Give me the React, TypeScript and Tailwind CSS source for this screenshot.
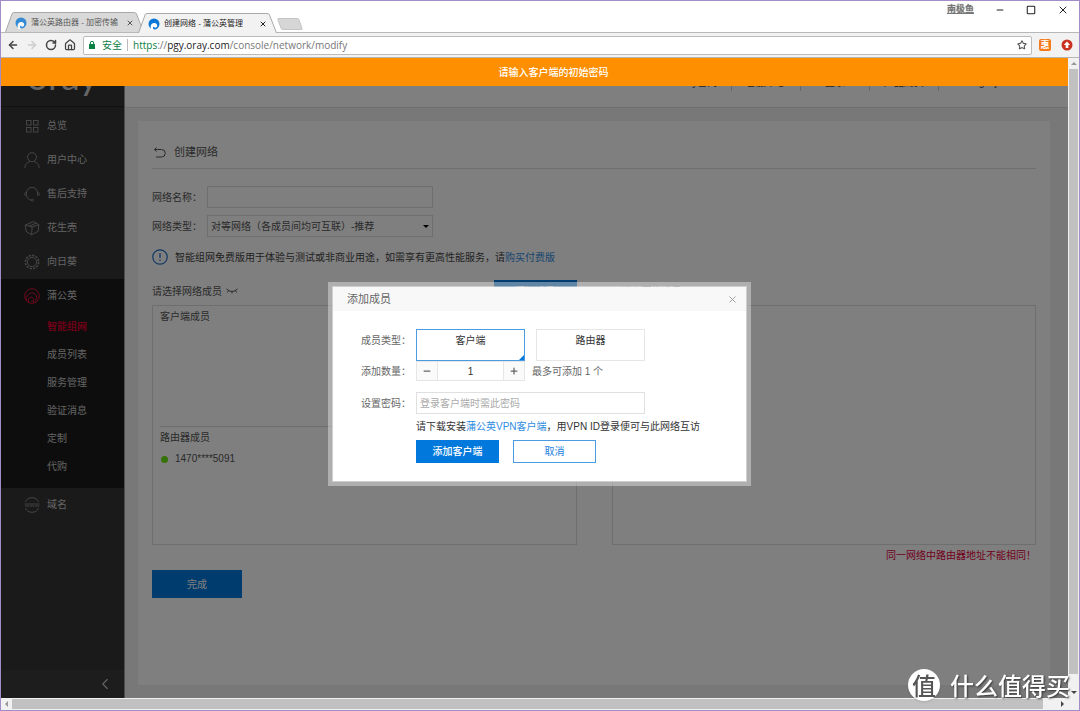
import React, { useState } from 'react';
import {
  ArrowLeft,
  ArrowRight,
  ChevronLeft,
  House,
  Minus,
  Plus,
  RotateCw,
  Square,
  Star,
  X,
} from 'lucide-react';
import { clsx } from 'clsx';

type IconProps = { className?: string };

const LINE = { fill: 'none', stroke: 'currentColor', strokeWidth: 1 } as const;

function OrayMark({ className }: IconProps) {
  return (
    <svg viewBox="0 0 12 12" className={className}>
      <circle cx="6" cy="6" r="5.5" fill="currentColor" />
      <path d="M3.400 12.200C1.400 8 3.500 5 6.200 5c2 0 3 1.400 3 2.700 0 1.300-1 2-1.900 2-1 0-1.500-.6-1.500-1.200-1.200.6-1.200 2 .4 3.700z" fill="#fff" />
    </svg>
  );
}

function LockIcon({ className }: IconProps) {
  return (
    <svg viewBox="0 0 8 10" className={className}>
      <rect x="1" y="4" width="6" height="5" rx=".5" fill="currentColor" />
      <path d="M2.300 4.500V3a1.700 1.700 0 0 1 3.400 0v1.500" fill="none" stroke="currentColor" />
    </svg>
  );
}

function GridIcon({ className }: IconProps) {
  return (
    <svg viewBox="0 0 16 16" className={className} {...LINE}>
      <rect x="2.500" y="2.500" width="4.500" height="4.500" />
      <rect x="9.500" y="2.500" width="4.500" height="4.500" />
      <rect x="2.500" y="9.500" width="4.500" height="4.500" />
      <rect x="9.500" y="9.500" width="4.500" height="4.500" />
    </svg>
  );
}

function UserIcon({ className }: IconProps) {
  return (
    <svg viewBox="0 0 16 16" className={className} {...LINE}>
      <circle cx="8" cy="5.200" r="4.500" />
      <path d="M.8 15.800c.3-3.600 2.600-5.600 5-6.300M15.200 15.800c-.3-3.600-2.600-5.600-5-6.300" />
    </svg>
  );
}

function HeadsetIcon({ className }: IconProps) {
  return (
    <svg viewBox="0 0 16 16" className={className} {...LINE}>
      <path d="M2.400 9.500V7a5.600 5.600 0 0 1 11.200 0v2.500" />
      <path d="M2.400 6.500C1 6.500.6 7.200.6 8s.4 1.600 1.800 1.600M13.600 6.500c1.400 0 1.800.7 1.800 1.500s-.4 1.600-1.800 1.600" />
      <path d="M2.600 10c.8 2.600 2.600 4 4.600 4.200" />
      <circle cx="8.400" cy="14.200" r="1" />
    </svg>
  );
}

function CubeIcon({ className }: IconProps) {
  return (
    <svg viewBox="0 0 16 16" className={className} {...LINE}>
      <path d="M1.200 5.200 9.500 1.500l5.300 3.200-.6 6.600-6.700 3.500-5.300-3.300z" />
      <path d="M1.200 5.200 8.200 7l6.600-2.300M8.200 7l-.7 7.800M5 6.200l7.200-3" />
    </svg>
  );
}

function SunflowerIcon({ className }: IconProps) {
  return (
    <svg viewBox="0 0 16 16" className={className} {...LINE}>
      <circle cx="8" cy="8" r="4.600" />
      <circle cx="8" cy="8" r="6.600" strokeWidth="1.600" strokeDasharray="2.200 1.256" />
    </svg>
  );
}

function DandelionIcon({ className }: IconProps) {
  return (
    <svg viewBox="0 0 16 16" className={className} {...LINE}>
      <circle cx="8" cy="8" r="7.300" />
      <path d="M2.200 12.500C1.800 7.800 4.600 5 8 5c3 0 4.700 2.200 4.700 4.500S11 13.600 9 13.600" />
      <path d="M4.600 14.400c-1-2.600.3-5.200 2.600-5.200 1.400 0 2.300 1 2.300 2.100 0 1.200-.9 2-2 2" />
    </svg>
  );
}

function WwwIcon({ className }: IconProps) {
  return (
    <svg viewBox="0 0 16 16" className={className} {...LINE}>
      <path d="M1.500 4.800a7.200 7.200 0 0 1 13 0M1.500 11.200a7.200 7.200 0 0 0 13 0" />
      <text x="8" y="10" textAnchor="middle" fontSize="7" fill="currentColor" stroke="none">www</text>
    </svg>
  );
}

const MENU = [
  { label: '总览', icon: GridIcon },
  { label: '用户中心', icon: UserIcon },
  { label: '售后支持', icon: HeadsetIcon },
  { label: '花生壳', icon: CubeIcon },
  { label: '向日葵', icon: SunflowerIcon },
];

const SUB_MENU = ['智能组网', '成员列表', '服务管理', '验证消息', '定制', '代购'];

const TOP_LINKS = ['Oray官网', '客服中心', '登录', '产品购买', 'Yingliujun'];

function Tab({ title, active }: { title: string; active?: boolean }) {
  return (
    <div className={clsx('relative flex h-5 w-[139px] items-center pt-0.5 pr-2.5 pl-2.5', active ? 'z-10 -mb-px -ml-1.5' : 'text-[#555]')}>
      <svg viewBox="0 0 139 20" preserveAspectRatio="none" className="absolute inset-0 h-full w-full">
        <path
          d="M.5 20 7 2Q7.500.5 9 .5H129Q131 .5 131.500 2L138.500 20"
          fill={active ? '#f2f2f2' : '#d9d9d9'}
          stroke="#a9a9a9"
        />
      </svg>
      <OrayMark className={clsx('relative mr-1 h-3 w-3 shrink-0 text-[#0a78d6]', !active && 'opacity-80')} />
      <span className="relative flex-1 text-[8px] leading-4 whitespace-nowrap">{title}</span>
      <button aria-label="关闭标签页" className="relative"><X className="h-2 w-2" strokeWidth={3} /></button>
    </div>
  );
}

function BrowserChrome() {
  return (
    <header className="shrink-0 bg-white text-[#222]">
      <div className="flex h-8 items-end border-b border-[#b8b8b8] pl-1">
        <Tab title="蒲公英路由器 - 加密传输" />
        <Tab title="创建网络 - 蒲公英管理" active />
        <button aria-label="新标签页" className="mb-0.5 ml-0.5 h-3 w-[22px] skew-x-[20deg] rounded-xs border border-[#c4c4c4] bg-[#d6d6d6]" />
        <div className="ml-auto flex items-center gap-[21px] self-start pt-0.5 pr-2.5">
          <span className="text-[9px] text-[#777] underline [text-shadow:0_0_1px_#333]">南极鱼</span>
          <button aria-label="最小化"><Minus className="h-2.5 w-2.5" strokeWidth={2.5} /></button>
          <button aria-label="最大化"><Square className="h-2.5 w-2.5" strokeWidth={2.5} /></button>
          <button aria-label="关闭"><X className="h-3 w-3" strokeWidth={2} /></button>
        </div>
      </div>
      <div className="flex h-[25px] items-center border-b border-[#b5b5b5] bg-[#f2f2f2] pr-1.5 pl-1.5">
        <div className="flex w-[76px] items-center gap-[7px] text-[#444]">
          <button aria-label="后退"><ArrowLeft className="h-3 w-3" strokeWidth={3} /></button>
          <button aria-label="前进" className="text-[#ccc]"><ArrowRight className="h-3 w-3" strokeWidth={3} /></button>
          <button aria-label="刷新"><RotateCw className="h-3 w-3" strokeWidth={3} /></button>
          <button aria-label="主页"><House className="h-3 w-3" strokeWidth={2.5} /></button>
        </div>
        <div className="flex h-[19px] flex-1 items-center rounded-xs border border-[#bbb] bg-white px-1 text-[10px]">
          <LockIcon className="mr-1.5 h-2.5 w-2 text-[#0b8043]" />
          <span className="text-[#0b8043]">安全</span>
          <span className="mx-[5px] h-3 w-px bg-[#bbb]" />
          <span className="font-['Open_Sans'] text-[10px] text-[#777]">
            <span className="text-[#0b8043]">https</span>://<span className="text-[#222]">pgy.oray.com</span>/console/network/modify
          </span>
          <button aria-label="收藏" className="ml-auto"><Star className="h-2.5 w-2.5 text-[#555]" strokeWidth={2.5} /></button>
        </div>
        <button aria-label="惠" className="ml-[7px] flex h-3 w-3 items-center justify-center rounded-xs bg-[#f47a1c] text-[9px] leading-none font-bold text-white">惠</button>
        <button aria-label="扩展程序" className="ml-2.5">
          <svg viewBox="0 0 12 12" className="h-3 w-3">
            <circle cx="6" cy="6" r="5.500" fill="#c8321f" />
            <path d="M6 2.500 9.200 6H7.300v3H4.700V6H2.800z" fill="#fff" />
          </svg>
        </button>
      </div>
    </header>
  );
}

function Sidebar() {
  return (
    <aside className="flex w-[124px] shrink-0 flex-col border-r border-[#999] bg-[#353535] text-[#c8c8c8]">
      <div className="h-[49px] shrink-0 border-b border-[#222] pl-[26px]">
        <span className="block font-['Lato'] text-[37px] leading-9 text-[#ccc]">oray</span>
      </div>
      <nav className="pt-0.5 leading-4">
        {MENU.map(({ label, icon: Icon }) => (
          <a key={label} href="#" className="flex h-[34px] items-center pl-[23px]">
            <Icon className="mr-[7px] h-4 w-4 text-[#8a8a8a]" />
            {label}
          </a>
        ))}
        <div className="bg-[#1a1a1a] pb-[7px]">
          <a href="#" className="flex h-[34px] items-center pl-[23px]">
            <DandelionIcon className="mr-[7px] h-4 w-4 text-[#e0103a]" />
            蒲公英
          </a>
          {SUB_MENU.map((item, i) => (
            <a key={item} href="#" className={clsx('flex h-7 items-center pl-[46px]', i === 0 && 'font-bold text-[#d4002e]')}>
              {item}
            </a>
          ))}
        </div>
        <a href="#" className="flex h-[34px] items-center pl-[23px]">
          <WwwIcon className="mr-[7px] h-4 w-4 text-[#8a8a8a]" />
          域名
        </a>
      </nav>
      <button aria-label="收起" className="mt-auto flex h-7 items-center justify-end bg-[#3a3a3a] pr-2.5">
        <ChevronLeft className="h-[18px] w-[18px]" strokeWidth={1.5} />
      </button>
    </aside>
  );
}

function NetworkForm() {
  return (
    <section className="mt-[13px] mr-[18px] mb-[13px] ml-[13px] flex-1 bg-white px-3.5 text-[#555]">
      <h1 className="flex h-12 items-center gap-2 border-b border-[#ddd] pt-4 text-[11px]">
        <svg viewBox="0 0 14 12" className="h-3 w-3.5" fill="none" stroke="currentColor">
          <path d="M4.500.5 2.500 2.500l2 2M2.500 2.500h7a3.500 3.500 0 0 1 0 7.500H4" />
        </svg>
        创建网络
      </h1>

      <div className="mt-[17px] flex h-[22px] items-center">
        <label htmlFor="net-name" className="w-[55px]">网络名称：</label>
        <input id="net-name" className="h-full w-[226px] border border-[#ddd] bg-white px-1" />
      </div>
      <div className="mt-[7px] flex h-[22px] items-center">
        <label htmlFor="net-type" className="w-[55px]">网络类型：</label>
        <div className="relative h-full w-[226px]">
          <select id="net-type" className="h-full w-full appearance-none border border-[#ddd] bg-white px-[3px]">
            <option>对等网络（各成员间均可互联）-推荐</option>
          </select>
          <span className="pointer-events-none absolute top-[10px] right-1 border-x-3 border-t-3 border-x-transparent border-t-black" />
        </div>
      </div>

      <p className="mt-2.5 flex h-5 items-center text-[#444]">
        <svg viewBox="0 0 16 16" className="mr-[7px] h-4 w-4 text-[#1f6cc8]" fill="none" stroke="currentColor" strokeWidth="1.200">
          <circle cx="8" cy="8" r="7.200" />
          <path d="M8 4v5M8 10.500V12" />
        </svg>
        智能组网免费版用于体验与测试或非商业用途，如需享有更高性能服务，请
        <a href="#" className="text-[#2f8be0]">购买付费版</a>
      </p>

      <div className="mt-[13px] grid grid-cols-2 gap-x-[35px]">
        <div>
          <div className="flex h-[22px] items-center">
            请选择网络成员
            <svg viewBox="0 0 12 6" className="ml-1 h-1.5 w-3" fill="none" stroke="currentColor">
              <path d="M.5 1Q6 6 11.500 1M2.500 2.500l-1 2M6 3.500v2M9.500 2.500l1 2" />
            </svg>
            <button className="ml-auto h-full w-[83px] bg-[#0078dc] text-white">添加成员</button>
          </div>
          <div className="mt-[3px] h-60 border border-[#ddd] px-[7px] pt-[3px] leading-4">
            <div className="h-[118px] border-b border-[#ddd]">客户端成员</div>
            <div className="pt-[3px]">路由器成员</div>
            <div className="mt-[5px] flex items-center">
              <span className="mr-[7px] ml-px h-[7px] w-[7px] rounded-full bg-[#6ae612]" />
              1470****5091
            </div>
          </div>
        </div>
        <div>
          <div className="flex h-[22px] items-center">已选中网络成员</div>
          <div className="mt-[3px] h-60 border border-[#ddd]" />
        </div>
      </div>
      <p className="mt-[3px] text-right leading-4 text-[#e6003c]">同一网络中路由器地址不能相同！</p>
      <button className="mt-1.5 h-7 w-[90px] bg-[#0078dc] text-white">完成</button>
    </section>
  );
}

function MemberDialog() {
  const [kind, setKind] = useState('客户端');

  return (
    <div role="dialog" aria-labelledby="dialog-title" className="w-[423px] bg-white/38 p-[5px]">
      <div className="bg-white text-[#666] outline outline-white/40">
        <div className="flex h-6 items-center justify-between bg-[#f8f8f8] pr-2 pl-3.5">
          <h2 id="dialog-title" className="text-[11px]">添加成员</h2>
          <button aria-label="关闭"><X className="h-[11px] w-[11px] text-[#999]" strokeWidth={2} /></button>
        </div>
        <form className="pt-[18px] pb-[18px] pl-7">
          <div role="radiogroup" aria-labelledby="kind-label" className="flex leading-[22px]">
            <span id="kind-label" className="w-[55px] pt-px">成员类型：</span>
            <div className="flex gap-[11px] text-center text-[#333]">
              {['客户端', '路由器'].map(item => (
                <label
                  key={item}
                  className={clsx('relative h-8 w-[109px] border', kind === item ? 'border-[#4a9ae4]' : 'border-[#e6e6e6]')}
                >
                  <input type="radio" name="kind" className="sr-only" checked={kind === item} onChange={() => setKind(item)} />
                  {item}
                  {kind === item && (
                    <span className="absolute right-0 bottom-0 border-t-5 border-r-5 border-t-transparent border-r-[#0078dc]" />
                  )}
                </label>
              ))}
            </div>
          </div>

          <div className="flex h-5 items-center">
            <label htmlFor="amount" className="w-[55px]">添加数量：</label>
            <div className="flex h-full w-[109px] border border-[#e6e6e6]">
              <button type="button" aria-label="减少" className="flex w-5 items-center justify-center bg-[#fafafa]">
                <Minus className="h-2.5 w-2.5" strokeWidth={3} />
              </button>
              <input id="amount" defaultValue="1" className="w-0 flex-1 border-x border-[#e6e6e6] text-center text-[#333]" />
              <button type="button" aria-label="增加" className="flex w-5 items-center justify-center bg-[#fafafa]">
                <Plus className="h-2.5 w-2.5" strokeWidth={3} />
              </button>
            </div>
            <span className="ml-[7px]">最多可添加 1 个</span>
          </div>

          <div className="mt-[11px] flex h-[22px] items-center">
            <label htmlFor="password" className="w-[55px]">设置密码：</label>
            <input
              id="password"
              placeholder="登录客户端时需此密码"
              className="h-full w-[229px] border border-[#e0e0e0] px-[3px] placeholder:text-[#aaa]"
            />
          </div>

          <div className="pl-[55px]">
            <p className="mt-[5px] leading-4 text-[#333]">
              请下载安装<a href="#" className="text-[#2f8be0]">蒲公英VPN客户端</a>，用VPN ID登录便可与此网络互访
            </p>
            <div className="mt-[5px] flex gap-3.5">
              <button type="button" className="h-[23px] w-[83px] bg-[#0078dc] font-medium text-white">添加客户端</button>
              <button type="button" className="h-[23px] w-[83px] border border-[#4a9ae4] text-[#1b80dc]">取消</button>
            </div>
          </div>
        </form>
      </div>
    </div>
  );
}

export default function App() {
  return (
    <div className="flex h-screen min-h-[711px] flex-col border border-[#a48cc8] bg-[#f1f1f1] font-['Liberation_Sans','Noto_Sans_CJK_SC',sans-serif] text-[10px]">
      <BrowserChrome />
      <div className="flex min-h-0 flex-1">
        <div className="relative flex min-w-0 flex-1 overflow-hidden bg-[#f0f0f0]">
          <Sidebar />
          <main className="flex min-w-0 flex-1 flex-col">
            <div className="flex h-[50px] shrink-0 items-center justify-end border-b border-[#ddd] bg-white pr-[34px] text-[#444]">
              {TOP_LINKS.map(link => (
                <a key={link} href="#" className="w-[69px] border-l border-[#ccc] text-center leading-4 first:border-l-0 last:w-24">{link}</a>
              ))}
            </div>
            <NetworkForm />
          </main>

          {/* modal layer */}
          <div className="absolute inset-0 flex items-start justify-center bg-black/50 pt-[224px] pl-2.5">
            <MemberDialog />
          </div>
          <div role="alert" className="absolute inset-x-0 top-0 flex h-7 items-center justify-center bg-[#fd8f00] pl-[38px] font-medium text-white">
            请输入客户端的初始密码
          </div>
        </div>

        {/* vertical scrollbar */}
        <div className="flex w-[11px] flex-col items-center px-px">
          <span className="my-1 border-x-3 border-b-3 border-x-transparent border-b-[#999]" />
          <span className="w-full flex-1 bg-[#c1c1c1]" />
          <span className="mt-[17px] mb-1 border-x-3 border-t-3 border-x-transparent border-t-[#444]" />
        </div>
      </div>

      {/* horizontal scrollbar */}
      <div className="flex h-3 shrink-0 items-center py-px">
        <span className="mx-1 border-y-3 border-r-3 border-y-transparent border-r-[#999]" />
        <span className="h-full flex-1 bg-[#c1c1c1]" />
        <span className="mr-[15px] ml-[18px] border-y-3 border-l-3 border-y-transparent border-l-[#444]" />
      </div>

      <div className="pointer-events-none fixed right-2.5 bottom-2.5 flex items-center gap-2.5 font-['Noto_Sans_CJK_SC',sans-serif] text-[24px] leading-8 font-medium text-white">
        <span className="flex h-8 w-8 items-center justify-center rounded-full bg-white text-[#555] shadow">值</span>
        <span className="[text-shadow:1px_1px_2px_#333]">什么值得买</span>
      </div>
    </div>
  );
}
